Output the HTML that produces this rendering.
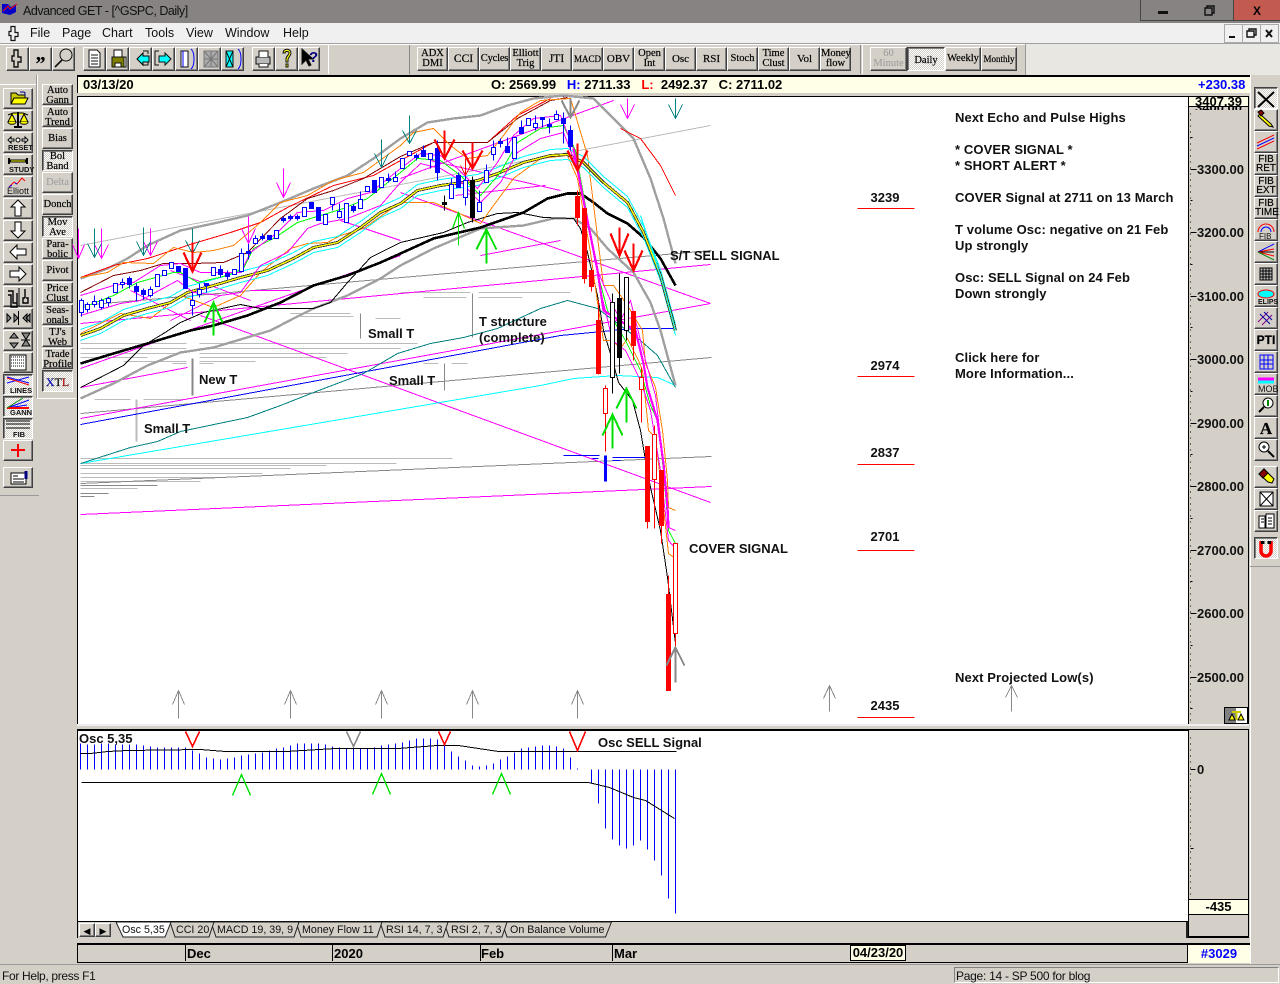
<!DOCTYPE html>
<html><head><meta charset="utf-8"><title>Advanced GET</title>
<style>
html,body{margin:0;padding:0}
body{width:1280px;height:983px;overflow:hidden;position:relative;background:#d4d0c8;font-family:"Liberation Sans",sans-serif;color:#000}
div{position:absolute;box-sizing:border-box}
.b{background:#d4d0c8;border:1px solid;border-color:#fff #404040 #404040 #fff;box-shadow:inset -1px -1px #808080;font:10.5px/9.5px "Liberation Serif",serif;text-align:center;padding-top:1px;white-space:nowrap;color:#000;-webkit-text-stroke:.2px #000}
.p{background:repeating-conic-gradient(#d4d0c8 0 25%,#fff 0 50%) 0 0/2px 2px;border-color:#404040 #fff #fff #404040;box-shadow:inset 1px 1px #808080}
.m{top:26px;font-size:12.5px;line-height:15px;color:#111}
.t{font-size:10.7px;line-height:16px;top:922px;color:#111;white-space:nowrap}
svg{position:absolute;left:0;top:0}
text{font-family:"Liberation Sans",sans-serif;font-weight:bold;font-size:13px}
.n text{letter-spacing:.1px}
</style></head><body>
<div style="left:0;top:0;width:1280px;height:23px;background:#878382"></div>
<div style="left:23px;top:4px;font-size:12.5px;line-height:15px;color:#111;letter-spacing:-.48px">Advanced GET - [^GSPC, Daily]</div>
<div style="left:1140px;top:0;width:47px;height:21px;background:#878382;border:1px solid #444;border-top:0"></div>
<div style="left:1186px;top:0;width:47px;height:21px;background:#878382;border-bottom:1px solid #444"></div>
<div style="left:1233px;top:0;width:47px;height:21px;background:#c25a50;border-bottom:1px solid #444;border-left:1px solid #444;font:bold 12px/22px 'Liberation Sans';text-align:center">X</div>
<div style="left:0;top:23px;width:1280px;height:20px;background:#f0f0f0"></div>
<div class="m" style="left:30px">File</div><div class="m" style="left:62px">Page</div><div class="m" style="left:102px">Chart</div><div class="m" style="left:145px">Tools</div><div class="m" style="left:186px">View</div><div class="m" style="left:225px">Window</div><div class="m" style="left:283px">Help</div>
<div style="left:1224px;top:24px;width:19px;height:19px;background:#f0f0f0;border:1px solid #aaa"></div>
<div style="left:1242px;top:24px;width:19px;height:19px;background:#f0f0f0;border:1px solid #aaa"></div>
<div style="left:1260px;top:24px;width:19px;height:19px;background:#f0f0f0;border:1px solid #aaa"></div>
<div style="left:0;top:43px;width:1280px;height:1px;background:#a0a0a0"></div>
<div style="left:0;top:44px;width:1025px;height:31px;background:#d4d0c8;border-top:1px solid #fff"></div>
<div style="left:1025px;top:44px;width:255px;height:31px;background:#e9e7e2;border-left:1px solid #999"></div>
<div style="left:328px;top:45px;width:1px;height:29px;background:#fff"></div>
<div style="left:409px;top:45px;width:1px;height:29px;background:#888"></div>
<div style="left:860px;top:45px;width:3px;height:29px;border-left:1px solid #888;border-right:1px solid #fff"></div>

<!-- toolbar top -->
<div class="b" style="left:6px;top:47px;width:23px;height:24px"></div><div class="b" style="left:29px;top:47px;width:23px;height:24px;font:bold 20px/30px 'Liberation Serif'">”</div><div class="b" style="left:52px;top:47px;width:23px;height:24px"></div>
<div class="b" style="left:83px;top:47px;width:23px;height:24px"></div><div class="b" style="left:106px;top:47px;width:23px;height:24px"></div><div class="b" style="left:129px;top:47px;width:23px;height:24px"></div><div class="b" style="left:152px;top:47px;width:23px;height:24px"></div><div class="b" style="left:175px;top:47px;width:23px;height:24px"></div><div class="b" style="left:198px;top:47px;width:23px;height:24px"></div><div class="b" style="left:221px;top:47px;width:23px;height:24px"></div>
<div class="b" style="left:252px;top:47px;width:23px;height:24px"></div><div class="b" style="left:275px;top:47px;width:23px;height:24px"></div><div class="b" style="left:298px;top:47px;width:22px;height:24px"></div>
<div class="b" style="left:417px;top:47px;width:31px;height:24px">ADX<br>DMI</div>
<div class="b" style="left:448px;top:47px;width:31px;height:24px;font-size:11.5px;line-height:20px">CCI</div>
<div class="b" style="left:479px;top:47px;width:31px;height:24px;line-height:20px;letter-spacing:-.2px">Cycles</div>
<div class="b" style="left:510px;top:47px;width:31px;height:24px">Elliott<br>Trig</div>
<div class="b" style="left:541px;top:47px;width:31px;height:24px;font-size:11.5px;line-height:20px">JTI</div>
<div class="b" style="left:572px;top:47px;width:31px;height:24px;font-size:9px;line-height:20px">MACD</div>
<div class="b" style="left:603px;top:47px;width:31px;height:24px;font-size:11px;line-height:20px">OBV</div>
<div class="b" style="left:634px;top:47px;width:31px;height:24px">Open<br>Int</div>
<div class="b" style="left:665px;top:47px;width:31px;height:24px;font-size:11px;line-height:20px">Osc</div>
<div class="b" style="left:696px;top:47px;width:31px;height:24px;font-size:11px;line-height:20px">RSI</div>
<div class="b" style="left:727px;top:47px;width:31px;height:24px;line-height:20px">Stoch</div>
<div class="b" style="left:758px;top:47px;width:31px;height:24px">Time<br>Clust</div>
<div class="b" style="left:789px;top:47px;width:31px;height:24px;font-size:11px;line-height:20px">Vol</div>
<div class="b" style="left:820px;top:47px;width:31px;height:24px">Money<br>flow</div>
<div class="b" style="left:870px;top:47px;width:37px;height:24px;color:#999;-webkit-text-stroke:0">60<br>Minute</div>
<div class="b p" style="left:907px;top:47px;width:38px;height:24px;line-height:23px">Daily</div>
<div class="b" style="left:945px;top:47px;width:36px;height:24px;line-height:20px">Weekly</div>
<div class="b" style="left:981px;top:47px;width:36px;height:24px;font-size:9px;line-height:20px">Monthly</div>

<!-- left frame -->
<div style="left:37px;top:75px;width:1px;height:323px;background:#fff"></div>
<div style="left:36px;top:75px;width:1px;height:323px;background:#999"></div>
<div style="left:37px;top:398px;width:39px;height:1px;background:#fff"></div>
<div style="left:0;top:495px;width:39px;height:1px;background:#999"></div>
<div style="left:0;top:84px;width:36px;height:1px;background:#fff"></div>

<!-- left col 1 -->
<div class="b" style="left:3px;top:88px;width:30px;height:21px"></div>
<div class="b" style="left:3px;top:110px;width:30px;height:21px"></div>
<div class="b" style="left:3px;top:132px;width:30px;height:21px"></div>
<div class="b" style="left:3px;top:154px;width:30px;height:21px"></div>
<div class="b" style="left:3px;top:176px;width:30px;height:21px"></div>
<div class="b" style="left:3px;top:198px;width:30px;height:21px"></div>
<div class="b" style="left:3px;top:220px;width:30px;height:21px"></div>
<div class="b" style="left:3px;top:242px;width:30px;height:21px"></div>
<div class="b" style="left:3px;top:264px;width:30px;height:21px"></div>
<div class="b" style="left:3px;top:286px;width:30px;height:21px"></div>
<div class="b" style="left:3px;top:308px;width:30px;height:21px"></div>
<div class="b" style="left:3px;top:330px;width:30px;height:21px"></div>
<div class="b" style="left:3px;top:352px;width:30px;height:21px"></div>
<div class="b p" style="left:3px;top:374px;width:30px;height:21px"></div>
<div class="b p" style="left:3px;top:396px;width:30px;height:21px"></div>
<div class="b p" style="left:3px;top:418px;width:30px;height:21px"></div>
<div class="b" style="left:3px;top:440px;width:30px;height:21px"></div>
<div class="b" style="left:3px;top:467px;width:30px;height:21px"></div>

<!-- left col 2 -->
<div class="b" style="left:42px;top:84px;width:31px;height:21px">Auto<br>Gann</div>
<div class="b" style="left:42px;top:106px;width:31px;height:21px">Auto<br>Trend</div>
<div class="b" style="left:42px;top:128px;width:31px;height:21px;line-height:18px">Bias</div>
<div class="b p" style="left:42px;top:150px;width:31px;height:21px">Bol<br>Band</div>
<div class="b" style="left:42px;top:172px;width:31px;height:21px;line-height:18px;color:#999;-webkit-text-stroke:0">Delta</div>
<div class="b" style="left:42px;top:194px;width:31px;height:21px;line-height:18px">Donch</div>
<div class="b p" style="left:42px;top:216px;width:31px;height:21px">Mov<br>Ave</div>
<div class="b" style="left:42px;top:238px;width:31px;height:21px">Para-<br>bolic</div>
<div class="b" style="left:42px;top:260px;width:31px;height:21px;line-height:18px">Pivot</div>
<div class="b" style="left:42px;top:282px;width:31px;height:21px">Price<br>Clust</div>
<div class="b" style="left:42px;top:304px;width:31px;height:21px">Seas-<br>onals</div>
<div class="b" style="left:42px;top:326px;width:31px;height:21px">TJ's<br>Web</div>
<div class="b" style="left:42px;top:348px;width:31px;height:21px">Trade<br>Profile</div>
<div class="b p" style="left:42px;top:370px;width:31px;height:22px;font-size:12px;line-height:20px"><span style="color:#00f">X</span>T<span style="color:#f00">L</span></div>

<!-- date bar -->
<div style="left:77px;top:75px;width:1173px;height:18px;background:#ffffe8;border-top:2px solid #000;border-left:1px solid #000"></div>
<div style="left:83px;top:77px;font:bold 13px/15px 'Liberation Sans'">03/13/20</div>
<div style="left:491px;top:77px;font:bold 13px/15px 'Liberation Sans';white-space:pre">O: 2569.99   <span style="color:#00f">H:</span> 2711.33   <span style="color:#f00">L:</span>  2492.37   C: 2711.02</div>
<div style="left:1198px;top:77px;font:bold 13px/15px 'Liberation Sans';color:#00f">+230.38</div>

<!-- main panels -->
<div style="left:77px;top:96px;width:1172px;height:628px;background:#fff;border:solid #000;border-width:1px 1px 0 1px"></div>
<div style="left:1188px;top:97px;width:61px;height:627px;background:#d4d0c8;border-left:1px solid #000;border-right:1px solid #000"></div>
<div style="left:1189px;top:97px;width:59px;height:10px;background:#ffffe8;overflow:hidden;border-bottom:1px solid #000;text-align:center;font:bold 13px/9px 'Liberation Sans'">3407.39</div>
<div style="left:1189px;top:107px;width:59px;height:3px;overflow:hidden;text-align:center;font:bold 13px/1px 'Liberation Sans'">3400.00</div>
<div style="left:1224px;top:707px;width:24px;height:17px;background:#fff;border:1px solid #000"></div>
<div style="left:1225px;top:708px;width:11px;height:15px;background:#808080"></div>
<div style="left:77px;top:724px;width:1172px;height:2px;background:#eee"></div>

<div style="left:77px;top:729px;width:1172px;height:193px;background:#fff;border:solid #000;border-width:2px 1px 1px 1px"></div>
<div style="left:1188px;top:730px;width:61px;height:208px;background:#d4d0c8;border:solid #000;border-width:0 1px 2px 1px"></div>
<div style="left:1189px;top:899px;width:59px;height:16px;background:#ffffe8;border:solid #000;border-width:1px 0;text-align:center;font:bold 13px/14px 'Liberation Sans'">-435</div>
<div style="left:77px;top:922px;width:1111px;height:16px;background:#d4d0c8;border-left:1px solid #000;border-right:2px solid #222"></div>
<div class="b" style="left:79px;top:923px;width:16px;height:14px;font:9px/12px 'Liberation Sans';-webkit-text-stroke:0">◀</div>
<div class="b" style="left:95px;top:923px;width:16px;height:14px;font:9px/12px 'Liberation Sans';-webkit-text-stroke:0">▶</div>

<svg width="1280" height="983" style="pointer-events:none">
<!-- tabs -->
<g stroke="#222" stroke-width="1" fill="#d4d0c8">
<path d="M611.5 922l-6 15H507l-5-15z"/><path d="M507 922l-5 15H449l-5-15z"/><path d="M448 922l-5 15H385l-5-15z"/><path d="M382 922l-5 15H301l-5-15z"/><path d="M299 922l-5 15H216l-5-15z"/><path d="M214 922l-5 15H175l-5-15z"/>
<path d="M171 922l-6 15H123l-7-15z" fill="#fff"/></g>
</svg>
<div class="t" style="left:122px">Osc 5,35</div><div class="t" style="left:176px">CCI 20</div><div class="t" style="left:217px">MACD 19, 39, 9</div><div class="t" style="left:302px">Money Flow 11</div><div class="t" style="left:386px">RSI 14, 7, 3</div><div class="t" style="left:451px">RSI 2, 7, 3</div><div class="t" style="left:510px">On Balance Volume</div>

<!-- bottom date bar -->
<div style="left:77px;top:943px;width:1111px;height:20px;background:#d4d0c8;border:solid #000;border-width:2px 1px 1px 1px"></div>
<div style="left:185px;top:945px;width:1px;height:16px;background:#000"></div>
<div style="left:332px;top:945px;width:1px;height:16px;background:#000"></div>
<div style="left:480px;top:945px;width:1px;height:16px;background:#000"></div>
<div style="left:612px;top:945px;width:1px;height:16px;background:#000"></div>
<div style="left:187px;top:946px;font:bold 13px/15px 'Liberation Sans'">Dec</div>
<div style="left:334px;top:946px;font:bold 13px/15px 'Liberation Sans'">2020</div>
<div style="left:481px;top:946px;font:bold 13px/15px 'Liberation Sans'">Feb</div>
<div style="left:614px;top:946px;font:bold 13px/15px 'Liberation Sans'">Mar</div>
<div style="left:850px;top:945px;width:56px;height:16px;background:#ffffe8;border:1px solid #000;text-align:center;font:bold 13px/14px 'Liberation Sans'">04/23/20</div>
<div style="left:1188px;top:943px;width:62px;height:20px;background:#ffffe8;border-top:2px solid #000;text-align:center;color:#00f;font:bold 13px/17px 'Liberation Sans'">#3029</div>
<div style="left:0;top:964px;width:1280px;height:1px;background:#999"></div>
<div style="left:2px;top:969px;font-size:12px;line-height:15px;color:#111;letter-spacing:-.33px">For Help, press F1</div>
<div style="left:954px;top:967px;width:325px;height:16px;border:1px solid;border-color:#808080 #fff #fff #808080;font-size:12px;line-height:16px;padding-left:1px;color:#111;letter-spacing:-.27px">Page: 14 - SP 500 for blog</div>

<!-- right toolbar -->
<div style="left:1250px;top:75px;width:1px;height:889px;background:#fff"></div>
<div class="b p" style="left:1254px;top:87px;width:24px;height:22px"></div>
<div class="b" style="left:1254px;top:109px;width:24px;height:22px"></div>
<div class="b" style="left:1254px;top:131px;width:24px;height:22px"></div>
<div class="b" style="left:1254px;top:153px;width:24px;height:22px;font:10px/9px 'Liberation Sans'">FIB<br>RET</div>
<div class="b" style="left:1254px;top:175px;width:24px;height:22px;font:10px/9px 'Liberation Sans'">FIB<br>EXT</div>
<div class="b" style="left:1254px;top:197px;width:24px;height:22px;font:10px/9px 'Liberation Sans'">FIB<br>TIME</div>
<div class="b" style="left:1254px;top:219px;width:24px;height:22px"></div>
<div class="b" style="left:1254px;top:241px;width:24px;height:22px"></div>
<div class="b" style="left:1254px;top:263px;width:24px;height:22px"></div>
<div class="b" style="left:1254px;top:285px;width:24px;height:22px"></div>
<div class="b" style="left:1254px;top:307px;width:24px;height:22px"></div>
<div class="b" style="left:1254px;top:329px;width:24px;height:22px;font:bold 12px/19px 'Liberation Sans'">PTI</div>
<div class="b" style="left:1254px;top:351px;width:24px;height:22px"></div>
<div class="b" style="left:1254px;top:373px;width:24px;height:22px"></div>
<div class="b" style="left:1254px;top:395px;width:24px;height:22px"></div>
<div class="b" style="left:1254px;top:417px;width:24px;height:22px;font:bold 17px/19px 'Liberation Serif'">A</div>
<div class="b" style="left:1254px;top:439px;width:24px;height:22px"></div>
<div class="b" style="left:1254px;top:466px;width:24px;height:22px"></div>
<div class="b" style="left:1254px;top:488px;width:24px;height:22px"></div>
<div class="b" style="left:1254px;top:510px;width:24px;height:22px"></div>
<div class="b p" style="left:1254px;top:537px;width:24px;height:22px"></div>
<div style="left:1250px;top:566px;width:30px;height:1px;background:#999"></div>

<svg width="1280" height="983">
<g transform="translate(.5 .5)" fill="none" style="shape-rendering:crispEdges">
<!-- profile lines -->
<path stroke="#bbb" d="M80 343H186M199 343H417M80 348H186M199 348H400M80 353H180M199 353H347M80 357H147M199 357H326M123 361H186M199 361H255M172 363H186M199 363H213M423 363H438M451 363H467M94 399H130M143 399H183M80 458H452M80 463H396M80 465H326M80 468H290M80 473H262M80 477H220M80 481H200M400 292H470M478 292H570M423 297H466M478 297H522M290 313H350M300 316H353M375 318H400M80 488H137"/>
<path stroke="#888" d="M80 485H157M80 493H108M80 496H94M472 293V337M360 313V338M444 363V390"/>
<path stroke="#888" stroke-width="2" d="M192 358V395"/>
<path stroke="#bbb" stroke-width="2" d="M136 399V441"/>
<!-- gray trendlines -->
<path stroke="#bbb" d="M80 245L710 125"/>
<path stroke="#888" d="M80 305L711 250M80 413L711 357M80 483L711 456"/>
<!-- pivots -->
<path stroke="#f0f" d="M80 514L711 486M80 418L710 303M80 323L710 264M80 387L187 367M80 368L400 255M200 315L710 502M400 192L710 303M400 178L613 100M430 160L560 190M455 195L545 185M480 255L560 240M340 220L400 240M170 270L250 300M250 290L290 290M130 290L190 320M220 295L170 320"/>
<path stroke="#00f" d="M80 424L560 335L633 328H675"/>
<path stroke="#0ff" d="M80 463L540 385L573 378L617 375L657 377L675 385"/>
<path stroke="#008080" d="M80 463L130 447L157 441L180 431L247 417L280 405L313 392L363 373L397 353L430 343L463 337L497 328L540 308L567 300L597 308L640 340L657 355L675 387"/>
<!-- gray bands -->
<g stroke="#a0a0a0" stroke-width="2.4">
<path d="M80 278L107 268L127 258L147 245L180 230L213 223L247 215L280 202L313 188L347 175L373 158L400 138L427 122L453 118L480 115L507 105L533 98L563 95L593 98L613 118L633 138L650 178L663 218L675 263"/>
<path d="M80 398L113 383L147 365L180 352L213 347L270 330L293 318L313 308L347 295L380 278L400 265L433 248L480 228L523 225L553 218L573 218L590 228L607 248L633 272L650 302L660 330L675 385"/>
</g>
<!-- black -->
<path stroke="#000" stroke-width="2.6" d="M80 363L113 353L147 343L190 330L213 325L247 315L280 302L313 285L347 275L380 262L400 253L433 238L480 227L523 212L547 198L567 193L580 193L593 202L607 213L627 223L643 237L660 258L675 285"/>
<path stroke="#000" d="M80 387L90 382L123 365L143 345L163 333L180 322L203 312L240 304L260 308L313 308L330 302L347 282L370 257L400 242L417 238L443 232L467 222L497 213L517 212L543 217L573 218L580 228L587 252L597 295L603 330L612 360L618 382L632 400L640 430L645 460L650 487L660 530L667 577L675 643"/>
<!-- red/brown/orange -->
<path stroke="#f00" d="M80 277L113 265L147 258L193 243L230 232L260 222L287 207L333 185L373 175L400 160L433 142L487 142L517 115L550 98M620 128L640 138L660 165L675 195"/>
<path stroke="#800000" d="M80 292L113 275L140 270L163 263L193 263L223 262L247 252L280 218L307 198L333 190L363 178L400 156L433 142L487 142L517 118L550 100L567 97"/>
<path stroke="#ff8000" d="M80 277L107 272L123 262L153 263L173 247L193 252L213 250L233 245L260 222L280 202L307 195L333 180L363 172L400 145L413 132L433 128L450 145L467 158L487 155L503 135L520 112L540 100L570 98L587 155L603 285L613 285L627 305L642 330L645 363L655 387L662 430L667 480L668 507L675 510"/>
<path stroke="#ff8000" d="M80 333L120 313L150 318L180 295L213 307L240 295L260 272L290 248L307 243L327 242L340 235L363 228L400 202L433 202L457 212L480 223L493 205L513 178L540 158L567 155L577 178L590 252L597 302L603 340L612 340L620 348L627 338L638 360L642 370L648 430L655 437L660 480L668 553L675 558"/>
<!-- central band -->
<path stroke="#0ff" transform="translate(0 -6)" d="M80 335L100 328L123 315L147 308L170 302L187 292L213 285L240 277L267 270L293 258L313 247L337 242L360 227L380 212L400 203L417 190L440 185L477 180L497 173L523 162L550 155L567 154L583 162L603 182L627 202L643 232L660 275L675 330"/>
<path stroke="#0ff" transform="translate(0 5)" d="M80 335L100 328L123 315L147 308L170 302L187 292L213 285L240 277L267 270L293 258L313 247L337 242L360 227L380 212L400 203L417 190L440 185L477 180L497 173L523 162L550 155L567 154L583 162L603 182L627 202L643 232L660 275L675 330"/>
<path stroke="#333" stroke-width="3" d="M80 335L100 328L123 315L147 308L170 302L187 292L213 285L240 277L267 270L293 258L313 247L337 242L360 227L380 212L400 203L417 190L440 185L477 180L497 173L523 162L550 155L567 154L583 162L603 182L627 202L643 232L660 275L675 330"/>
<path stroke="#ff0" stroke-width="1.4" d="M80 335L100 328L123 315L147 308L170 302L187 292L213 285L240 277L267 270L293 258L313 247L337 242L360 227L380 212L400 203L417 190L440 185L477 180L497 173L523 162L550 155L567 154L583 162L603 182L627 202L643 232L660 275L675 330"/>
<!-- green + magenta envelope -->
<path stroke="#0f0" d="M80 308L113 295L137 282L173 272L180 272L197 282L227 275L243 268L253 248L273 238L297 222L320 215L343 208L367 198L400 172L417 158L440 160L460 175L480 195L500 172L517 142L540 128L563 125L575 150L597 272L607 310L625 340L640 370L650 405L657 420L663 470L668 530L675 543"/>
<path stroke="#f0f" d="M80 295L113 285L133 282L160 265L180 263L200 272L240 272L250 252L277 232L297 212L323 210L347 198L370 192L400 168L420 153L440 155L457 168L477 188L497 162L513 135L533 118L560 115L573 148L597 270L610 300L620 320L630 300L645 360L655 395L663 463L668 527L675 530"/>
<path stroke="#f0f" d="M80 315L120 303L140 300L177 280L193 292L220 295L240 292L260 265L287 252L307 228L320 223L347 218L380 205L400 182L420 163L440 168L457 178L480 202L500 182L517 152L540 138L563 132L578 170L600 290L612 340L625 350L640 380L650 410L660 470L668 540L675 548"/>
<path stroke="#f0f" stroke-width="2.2" d="M573 148L583 200L597 270L603 310L635 330L643 363L647 387L657 420L663 463L667 507L668 527"/>
<path stroke="#0ff" stroke-width="1" d="M640 215L660 275L675 330"/>

<!-- candles: wicks -->
<path stroke="#00f" d="M81 298V316M87 302V312M94 295V307M101 298V309M108 296V306M122 278V288M129 276V288M136 283V301M143 288V299M150 286V297M192 292V315M199 283V297M206 283V292M220 265V277M227 270V279M241 248V272M248 238V259M255 235V243M262 233V240M283 216V222M290 214V220M297 214V220M332 197V210M339 203V218M353 204V212M360 191V208M388 173V182M395 171V181M416 153V160M423 145V156M430 153V168M437 140V180M451 178V198M458 172V187M465 170V205M479 190V211M486 164V182M493 140V160M500 138V147M507 137V152M521 120V133M535 115V130M542 117V127M549 118V133M556 110V119M563 112V143M570 125V150"/>
<path fill="#fff" stroke="#00f" d="M79 300h4v12h-4zM85 304h4v5h-4zM92 301h4v3h-4zM99 300h4v7h-4zM106 298h4v4h-4zM113 283h4v9h-4zM120 282h4v2h-4zM148 289h4v6h-4zM155 274h4v12h-4zM162 270h4v5h-4zM169 262h4v6h-4zM190 300h4v5h-4zM197 289h4v5h-4zM211 267h4v8h-4zM232 269h4v5h-4zM239 253h4v18h-4zM253 238h4v5h-4zM274 230h4v8h-4zM302 207h4v9h-4zM323 214h4v10h-4zM330 197h4v7h-4zM337 211h4v6h-4zM344 203h4v19h-4zM358 199h4v9h-4zM365 186h4v5h-4zM379 177h4v10h-4zM393 177h4v4h-4zM400 158h4v10h-4zM407 151h4v4h-4zM428 153h4v6h-4zM449 184h4v14h-4zM463 180h4v17h-4zM477 202h4v9h-4zM484 170h4v12h-4zM491 147h4v7h-4zM512 137h4v21h-4zM526 118h4v7h-4zM533 123h4v4h-4zM554 114h4v5h-4z"/>
<path fill="#00f" stroke="#00f" d="M127 278h4v6h-4zM134 286h4v5h-4zM141 290h4v4h-4zM176 266h4v5h-4zM183 268h4v20h-4zM218 269h4v5h-4zM225 273h4v3h-4zM260 236h4v2h-4zM267 235h4v4h-4zM281 218h4v2h-4zM288 216h4v2h-4zM295 216h4v2h-4zM309 202h4v6h-4zM316 207h4v13h-4zM351 206h4v4h-4zM372 180h4v12h-4zM421 150h4v6h-4zM435 148h4v24h-4zM456 175h4v12h-4zM505 146h4v6h-4zM519 127h4v6h-4zM561 118h4v5h-4zM568 130h4v16h-4zM204 283h4v2h-4zM246 251h4v2h-4zM386 178h4v2h-4zM414 155h4v2h-4zM498 141h4v2h-4zM540 117h4v2h-4zM547 124h4v2h-4z"/>
<!-- black candles -->
<path stroke="#000" d="M444 195V210M612 293V393M619 273V373M626 277V340M472 176V222"/>
<path fill="#000" stroke="#000" d="M470 180h4v37h-4zM442 202h4v2h-4zM617 298h4v59h-4z"/>
<path fill="#fff" stroke="#000" d="M610 302h4v75h-4zM624 277h4v53h-4z"/>
<!-- red candles -->
<path stroke="#f00" d="M577 190V225M584 208V283M591 270V291M605 385V451M633 311V360M641 367V422M647 446V528M654 425V528M661 470V543M668 575V690M675 633V682M598 300V374"/>
<path fill="#f00" stroke="#f00" d="M575 196h4v21h-4zM582 208h4v70h-4zM589 270h4v16h-4zM596 320h4v53h-4zM631 311h4v34h-4zM645 446h4v75h-4zM659 470h4v55h-4zM666 594h4v96h-4z"/>
<path fill="#fff" stroke="#f00" d="M603 388h4v25h-4zM639 377h4v12h-4zM652 434h4v45h-4zM673 543h4v90h-4z"/>
<path stroke="#00f" d="M563 455H599M592 458H598M612 457H645M612 460H620"/>
<path stroke="#00f" stroke-width="3" d="M605 455V481"/>

<!-- arrows -->
<path stroke="#f0f" d="M78 228V258M72 244L78 258L84 244M101 228V258M94 244L101 258L108 244M150 228V255M143 241L150 255L157 241M248 216V243M241 228L248 243L255 228M283 168V197M276 182L283 197L290 182M627 98V118M620 104L627 118L634 104"/>
<path stroke="#008080" d="M94 228V257M87 243L94 257L101 243M143 227V255M136 241L143 255L150 241M192 228V253M185 240L192 253L199 240M381 139V167M374 153L381 167L388 153M409 115V143M402 130L409 143L416 130M675 98V118M668 104L675 118L682 104"/>
<g stroke="#f00" stroke-width="2.2"><path d="M192 242V271M183 252L192 271L201 252M444 130V158M434 139L444 158L454 139M472 142V168M462 150L472 168L482 150M577 143V170M567 150L577 170L587 150M619 227V255M610 233L619 255L628 233M633 243V270M624 250L633 270L642 250"/></g>
<path stroke="#f00" d="M465 158V175M460 165L465 175L470 165"/>
<g stroke="#00e000"><path stroke-width="2" d="M213 302V335M204 322L213 302L222 322M486 228V263M476 249L486 229L496 249M612 413V448M602 435L612 414L622 435M626 387V422M616 408L626 388L636 408"/><path stroke-width="1.3" d="M458 212V245M452 228L458 212L464 228"/></g>
<g stroke="#888"><path d="M178 690V718M172 704L178 690L184 704M290 690V718M284 704L290 690L296 704M381 690V718M375 704L381 690L387 704M472 690V718M466 704L472 690L478 704M577 690V718M571 704L577 690L583 704M829 685V711M823 698L829 685L835 698M1011 685V711M1005 697L1011 685L1017 697"/><path stroke-width="2" d="M570 98V117M561 100L570 117L579 100M675 647V682M666 665L675 647L684 665"/></g>

<!-- red target lines -->
<path stroke="#f00" d="M857 208H914M857 376H914M857 464H914M857 550H914M857 717H914"/>

<!-- axis -->
<path stroke="#000" d="M1190 169h6M1190 232h6M1190 296h6M1190 359h6M1190 423h6M1190 486h6M1190 550h6M1190 613h6M1190 677h6M1190 137h2M1190 200h2M1190 264h2M1190 327h2M1190 391h2M1190 454h2M1190 518h2M1190 581h2M1190 645h2M1190 708h2"/>
<path stroke="#000" stroke-dasharray="1 5" d="M1190 113V723M1190 737V895"/>
<path stroke="#000" d="M1190 769h5M1190 848h3"/>

<!-- osc -->
<path stroke="#00f" d="M80 769V743M87 769V744M94 769V744M101 769V743M108 769V743M115 769V744M122 769V744M129 769V744M136 769V744M143 769V745M150 769V746M157 769V747M164 769V747M171 769V747M178 769V747M185 769V747M192 769V750M199 769V753M206 769V757M213 769V758M220 769V759M227 769V758M234 769V757M241 769V755M248 769V754M255 769V753M262 769V752M269 769V750M276 769V748M283 769V747M290 769V745M297 769V743M304 769V743M311 769V743M318 769V743M325 769V744M332 769V746M339 769V747M346 769V748M353 769V748M360 769V748M367 769V748M374 769V747M381 769V745M388 769V744M395 769V743M402 769V742M409 769V740M416 769V738M423 769V738M430 769V738M437 769V739M444 769V745M451 769V751M458 769V756M465 769V760M472 769V765M479 769V766M486 769V765M493 769V763M500 769V759M507 769V756M514 769V752M521 769V748M528 769V747M535 769V746M542 769V745M549 769V745M556 769V746M563 769V748M570 769V757M577 769V768M591 769V783M598 769V803M605 769V828M612 769V839M619 769V845M626 769V848M633 769V845M640 769V840M647 769V849M654 769V860M661 769V875M668 769V898M675 769V913"/>
<path stroke="#000" d="M80 753L90 753L107 751L127 750L200 749L225 751L286 751L335 748L397 748L437 745L458 745L498 751L576 751L676 751M81 782H588L609 787L633 797L645 800L674 818"/>
<path stroke="#f00" stroke-width="1.6" d="M185 731L192 746L199 731M438 731L444 744L450 731M569 731L577 750L585 731"/>
<path stroke="#888" stroke-width="1.6" d="M346 731L353 746L360 731"/>
<path stroke="#00e000" stroke-width="1.4" d="M232 795L241 774L250 795M372 794L381 773L390 794M492 794L501 773L510 794"/>
</g>

<!-- chart text -->
<g fill="#111">
<text x="144" y="433">Small T</text><text x="199" y="384">New T</text><text x="368" y="338">Small T</text><text x="389" y="385">Small T</text><text x="479" y="326">T structure</text><text x="479" y="342">(complete)</text><text x="670" y="260">S/T SELL SIGNAL</text><text x="689" y="553">COVER SIGNAL</text>
<g class="n"><text x="955" y="122">Next Echo and Pulse Highs</text><text x="955" y="154">* COVER SIGNAL *</text><text x="955" y="170">*  SHORT ALERT *</text><text x="955" y="202">COVER Signal at 2711 on 13 March</text><text x="955" y="234">T volume Osc: negative on 21 Feb</text><text x="955" y="250">Up strongly</text><text x="955" y="282">Osc: SELL Signal on 24 Feb</text><text x="955" y="298">Down strongly</text><text x="955" y="362">Click here for</text><text x="955" y="378">More Information...</text><text x="955" y="682">Next Projected Low(s)</text></g>
<g text-anchor="middle"><text x="885" y="202">3239</text><text x="885" y="370">2974</text><text x="885" y="457">2837</text><text x="885" y="541">2701</text><text x="885" y="710">2435</text></g>
<text x="1197" y="174">3300.00</text><text x="1197" y="237">3200.00</text><text x="1197" y="301">3100.00</text><text x="1197" y="364">3000.00</text><text x="1197" y="428">2900.00</text><text x="1197" y="491">2800.00</text><text x="1197" y="555">2700.00</text><text x="1197" y="618">2600.00</text><text x="1197" y="682">2500.00</text><text x="1197" y="774">0</text>
<text x="79" y="743">Osc 5,35</text><text x="598" y="747">Osc SELL Signal</text>
</g>

<!-- icons: title + menu -->
<path d="M2 4h6l3 3 5-3v8l-6 3-8-2z" fill="#0000c8"/><path d="M3 11l5-5 2 3 7-5" stroke="#f00" fill="none"/>
<path d="M1158 11h10v3h-10z" fill="#111"/>
<path d="M1205 8h7v7h-7zM1207 8V6h7v7h-2" fill="none" stroke="#111" stroke-width="1.4"/>
<g fill="none" stroke="#111">
<path d="M11 26.5h4v6h3v4h-3v4h-4v-5H9v-4h2z" stroke-width="1.2"/>
<path d="M1229 37h6" stroke-width="2"/><path d="M1247 31h7v6h-7zM1249 31v-2h7v6h-2" stroke-width="1.4"/><path d="M1266 30l6 7M1272 30l-6 7" stroke-width="2"/>
<!-- toolbar glyphs -->
<path d="M14 50h4v7h3v5h-3v5h-4v-6h-2v-5h2z" stroke-width="1.4"/>
<circle cx="66" cy="55" r="6"/><path d="M62 60l-7 7" stroke-width="1.6"/>
<path d="M89 50h8l3 3v14H89zM91 55h7M91 58h7M91 61h7M91 64h7" fill="#fff"/>
<path d="M114 50h8v7h4v10h-13V58h1z" fill="#fff"/><path d="M112 57h12v10h-12z" fill="#808000"/><path d="M115 63h6v4h-6z" fill="#fff"/>
<path d="M137 59l6-6v3h6v6h-6v3z" fill="#0ff" stroke="#000"/><path d="M143 51h5v3M143 65h5v-3"/>
<path d="M171 59l-6-6v3h-6v6h6v3z" fill="#0ff"/><path d="M159 51h-4v14h4"/>
<path d="M181 51h7v16h-7z" fill="#fff"/><path d="M183 51v16M191 49c4 3 4 17 0 20" stroke="#00f"/>
<path d="M204 51h14v16h-14z" fill="#aaa" stroke="#777"/><path d="M204 51l14 16M218 51l-14 16M211 51v16M204 59h14" stroke="#777"/>
<path d="M226 51h7v16h-7z" fill="#0ff"/><path d="M226 51l7 16M233 51l-7 16"/><path d="M238 49c4 3 4 17 0 20" stroke="#00f"/>
<path d="M256 57h14v7h-14z" fill="#bbb"/><path d="M259 57V51h9v6M259 64v3h9v-3" fill="#fff"/>
<path d="M283 53c0-5 8-5 8 0 0 3-3 4-3 7v2h-2v-3c0-3 3-4 3-6 0-2-4-2-4 0z" fill="#ff0"/><path d="M286 64h2v3h-2z" fill="#ff0"/>
<path d="M302 49v15l4-4 3 6 2-1-3-6h5z" fill="#000"/>
</g>
<text x="309" y="62" fill="#000080" style="font-size:15px">?</text>

<!-- left col icons -->
<g fill="none" stroke="#000">
<path d="M11 93h5l2 2h7v9H11z" fill="#cc0"/><path d="M11 104l3-6h14l-3 6z" fill="#ff0"/><path d="M20 92h4l1 1v3" stroke="#000080"/>
<path d="M8 115l5-2h10l5 2M12 114l-4 8h8zM24 114l-4 8h8z" fill="#ff0"/><path d="M18 112v14M14 127h8" stroke-width="2"/><path d="M8 122c0 3 8 3 8 0M20 122c0 3 8 3 8 0" fill="#ff0"/>
<path d="M8 140l3-3v2h3v2h-3v2zM28 140l-3-3v2h-3v2h3v2z" fill="#fff"/><circle cx="18" cy="140" r="2" fill="#fff"/>
<path d="M9 158v6M27 158v6" stroke-width="2"/><path d="M9 161h18" stroke="#000" stroke-width="3"/><path d="M11 161h14" stroke="#ff0"/>
<path d="M9 187l5-5 3 2 5-6 3 3" stroke="#f00"/><path d="M9 187l3-2M15 183l2 1" stroke="#00f"/>
<g fill="#fff"><path d="M18 200l7 7h-4v9h-6v-9h-4z"/><path d="M18 238l7-7h-4v-9h-6v9h-4z"/><path d="M10 252l7-7v4h9v6h-9v4z"/><path d="M26 274l-7-7v4h-9v6h9v4z"/></g>
<path d="M8 291h5v12h4M8 295h3v12h6V293M25 289v9M25 298h-2v5h5v-5h-2" stroke-width="1.4"/><path d="M19 288v18" stroke-width="1"/>
<path d="M11 318l-4-4v8zM14 314l4 4-4 4zM23 318l4-4v8zM30 314l-4 4 4 4z" fill="#888"/><path d="M18.5 311v14"/>
<path d="M10 338l4-5 4 5zM10 343l4 5 4-5z" fill="#888"/><path d="M21 340h9M22 333h8l-8 13h8z" fill="#888"/>
<rect x="10" y="355" width="16" height="15" fill="#fff"/><path d="M11 357h14M11 360h14M11 363h14M11 366h14" stroke="#000" stroke-dasharray="1 1"/>
<path d="M7 377l22 6M7 383l22-6" stroke="#00f"/><path d="M7 378l22 7" stroke="#f00"/>
<path d="M7 408l22-8M7 408l20-3" stroke="#00f"/><path d="M7 408h22" stroke="#f00" stroke-width="2"/><path d="M7 408l16-10" stroke="#080"/>
<path d="M6 421h24M6 424h24M6 428h24"/>
<path d="M18 444v13M11 450h14" stroke="#f00" stroke-width="2"/>
<path d="M11 473h15v11H11z" fill="#fff"/><path d="M13 476h5M13 479h11M13 482h11"/><path d="M26 471v8" stroke="#000080" stroke-width="3"/>
</g>
<g fill="#111" style="font-size:7px"><text x="8" y="150" style="font-size:7.5px">RESET</text><text x="9" y="172" style="font-size:7.5px">STUDY</text><text x="7" y="194" style="font-size:9px;font-weight:normal">Elliott</text><text x="10" y="393" style="font-size:7.5px">LINES</text><text x="10" y="415" style="font-size:7.5px">GANN</text><text x="13" y="437" style="font-size:7.5px">FIB</text></g>

<!-- right tool icons -->
<g fill="none" stroke="#000">
<path d="M1258 92l16 15M1274 92l-16 15" stroke-width="2"/>
<path d="M1260 114l11 10 2 3-4-1-11-10z" fill="#ff0"/><path d="M1258 112l3-2 3 3-3 3z" fill="#800"/>
<path d="M1257 143l17-8" stroke="#f00"/><path d="M1257 146l17-8" stroke="#00f"/><path d="M1257 149l17-8" stroke="#f00"/>
<path d="M1258 232a8 8 0 0 1 16 0" stroke="#f00"/><path d="M1261 232a5 5 0 0 1 10 0" stroke="#00f"/>
<path d="M1258 252l16-8" stroke="#00f"/><path d="M1258 252l16-3" stroke="#f00"/><path d="M1258 252h16" stroke="#000"/><path d="M1258 252l16 4" stroke="#f00"/><path d="M1258 252l16 8" stroke="#080"/>
<rect x="1260" y="268" width="12" height="12" fill="#bbb"/><path d="M1263 268v12M1266 268v12M1269 268v12M1260 271h12M1260 274h12M1260 277h12"/>
<ellipse cx="1266" cy="294" rx="8" ry="4" fill="#0ff" stroke="#f00"/>
<path d="M1258 322l10-10M1262 325l10-10" stroke="#808"/><path d="M1260 314l10 10M1264 312l8 8" stroke="#00a"/>
<rect x="1260" y="355" width="13" height="14" stroke="#00f"/><path d="M1264 355v14M1268 355v14M1260 360h13M1260 364h13" stroke="#00f"/>
<path d="M1258 379h16" stroke="#f0f" stroke-width="3"/><path d="M1258 382h16" stroke="#0ff" stroke-width="3"/>
<circle cx="1268" cy="403" r="5" fill="#fff"/><path d="M1264 407l-5 5" stroke-width="2"/><path d="M1268 400v6" stroke="#080" stroke-width="2"/>
<circle cx="1264" cy="447" r="5" fill="#fff"/><path d="M1262 447h4M1264 445v4"/><path d="M1268 451l6 6" stroke-width="2"/>
<path d="M1259 474l5-5 10 10-2 4-4-1z" fill="#ff0"/><path d="M1259 474l5-5 4 4-5 5z" fill="#800"/>
<rect x="1260" y="492" width="13" height="14" fill="#fff"/><path d="M1260 492l13 14M1273 492l-13 14"/>
<path d="M1259 516h6v12h-6zM1266 514h8v14h-8z" fill="#fff"/><path d="M1261 519h3M1261 522h3M1268 518h4M1268 521h4M1268 524h4"/>
<path d="M1261 541v10a5 5 0 0 0 10 0v-10" stroke="#f00" stroke-width="3.5"/>
<path d="M1261 541h3.500v3h-3.500zM1267.500 541h3.500v3h-3.500z" fill="#000" stroke="none"/>
<path d="M1229 720l3-6 3 6zM1238 720l3-6 3 6z" fill="#ff0" stroke="#000"/><path d="M1232 712h9M1236.500 711v9" stroke="#cc0" stroke-width="2"/>
</g>
<g fill="#111"><text x="1259" y="239" style="font-size:8px;font-weight:normal">FIB</text><text x="1258" y="304" style="font-size:7px">ELIPS</text><text x="1258" y="392" style="font-size:9px;font-weight:normal">MOB</text></g>
</svg>
</body></html>
